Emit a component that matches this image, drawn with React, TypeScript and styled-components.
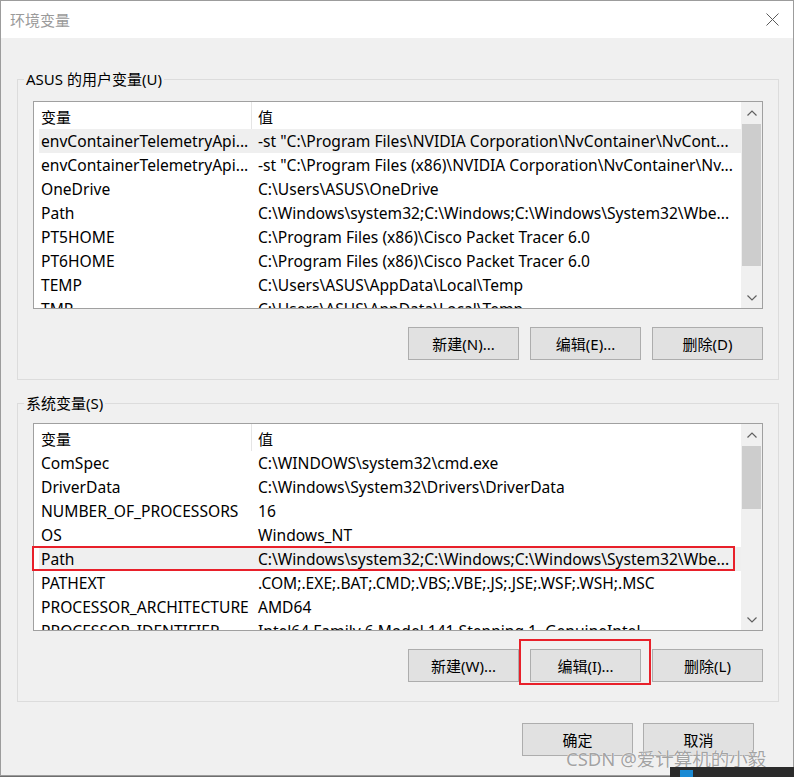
import React from 'react';
import styled, { createGlobalStyle } from 'styled-components';

const GlobalStyle = createGlobalStyle`
  html, body {
    margin: 0;
    padding: 0;
    background: #6e6e6e;
  }
  body {
    font-family: "Noto Sans", "Noto Sans CJK SC", sans-serif;
    font-size: 15px;
    color: #000;
  }
`;

const RED = '#e8202a';

const Window = styled.div`
  position: relative;
  width: 794px;
  height: 776px;
  box-sizing: border-box;
  border: 1px solid #9c9c9c;
  background: #f0f0f0;
  display: flex;
  flex-direction: column;
`;

const TitleBar = styled.div`
  height: 37px;
  flex: none;
  background: #fff;
  display: flex;
  align-items: center;
  justify-content: space-between;
  padding: 0 14px 0 9px;
`;

const Title = styled.span`
  font-size: 15px;
  color: #9a9a9a;
`;

const Body = styled.div`
  flex: 1;
  display: flex;
  flex-direction: column;
  padding: 0 14px 0 16px;
`;

const Group = styled.fieldset<{ $gap: number; $pad: number }>`
  margin: ${p => p.$gap}px 0 0;
  padding: ${p => p.$pad}px 15px 19px 15px;
  border: 1px solid #dcdcdc;
  min-width: 0;
`;

const Legend = styled.legend`
  font-size: 15px;
  line-height: 20px;
  padding: 0 2px;
  margin-left: -9px;
`;

const ListBox = styled.div`
  height: 208px;
  box-sizing: border-box;
  border: 1px solid #a0a0a0;
  background: #fff;
  display: flex;
`;

const ListBody = styled.div`
  flex: 1;
  display: flex;
  flex-direction: column;
  clip-path: inset(0 0 0 -8px);
`;

const HeaderRow = styled.div`
  flex: none;
  height: 27px;
  display: flex;
  margin-left: 5px;
`;

const HeadCell = styled.div<{ $first?: boolean }>`
  box-sizing: border-box;
  width: ${p => (p.$first ? '213px' : 'auto')};
  flex: ${p => (p.$first ? 'none' : '1')};
  border-right: ${p => (p.$first ? '1px solid #e5e5e5' : 'none')};
  padding: 3px 0 0 ${p => (p.$first ? '2px' : '6px')};
  line-height: 24px;
`;

const Row = styled.div<{ $selected?: boolean; $marked?: boolean }>`
  position: relative;
  flex: none;
  height: 24px;
  display: flex;
  margin-left: 5px;
  line-height: 24px;
  background: ${p => (p.$selected ? '#efefef' : 'transparent')};

  &::after {
    content: '';
    display: ${p => (p.$marked ? 'block' : 'none')};
    position: absolute;
    top: -1px;
    bottom: 0;
    left: -7px;
    right: 6px;
    border: 2px solid ${RED};
  }
`;

const Cell = styled.div<{ $first?: boolean }>`
  box-sizing: border-box;
  width: ${p => (p.$first ? '213px' : 'auto')};
  flex: ${p => (p.$first ? 'none' : '1')};
  min-width: 0;
  padding-left: ${p => (p.$first ? '2px' : '6px')};
  font-size: 15.6px;
  white-space: nowrap;
  overflow: hidden;
`;

const Scrollbar = styled.div`
  flex: none;
  width: 21px;
  background: #f0f0f0;
  display: flex;
  flex-direction: column;
`;

const ArrowBox = styled.div`
  height: 21px;
  flex: none;
  display: flex;
  align-items: center;
  justify-content: center;
`;

const Track = styled.div`
  flex: 1;
`;

const Thumb = styled.div<{ $height: number }>`
  margin: 1px 1px 0;
  height: ${p => p.$height}px;
  background: #cdcdcd;
`;

const ButtonRow = styled.div<{ $gap: number; $right?: number; $top: number }>`
  display: flex;
  justify-content: flex-end;
  gap: ${p => p.$gap}px;
  margin: ${p => p.$top}px ${p => p.$right ?? 0}px 0 0;
`;

const Button = styled.button`
  width: 111px;
  height: 33px;
  box-sizing: border-box;
  border: 1px solid #adadad;
  background: #e1e1e1;
  font-family: "Noto Sans", "Noto Sans CJK SC", sans-serif;
  font-size: 15px;
  color: #000;
  padding: 0;
`;

const Marked = styled.span`
  position: relative;
  display: flex;

  &::after {
    content: '';
    position: absolute;
    top: -10px;
    right: -10px;
    bottom: -3px;
    left: -11px;
    border: 2px solid ${RED};
    pointer-events: none;
  }
`;

const Watermark = styled.div`
  position: absolute;
  left: 565px;
  top: 745px;
  font-size: 18.5px;
  line-height: 26px;
  color: #a3a3a3;
  text-shadow: 0 0 1px #fff, 0 0 1px #fff;
  white-space: nowrap;
`;

const Taskbar = styled.div`
  position: absolute;
  left: 670px;
  top: 767px;
  width: 124px;
  height: 10px;
  background: #2b2b2b;
`;

const TaskIcon = styled.div`
  margin: 3px 0 0 10px;
  width: 13px;
  height: 7px;
  background: #1a8ad4;
`;

type Item = { name: string; value: string; selected?: boolean; marked?: boolean };

const userVars: Item[] = [
  { name: 'envContainerTelemetryApi...', value: '-st "C:\\Program Files\\NVIDIA Corporation\\NvContainer\\NvCont...', selected: true },
  { name: 'envContainerTelemetryApi...', value: '-st "C:\\Program Files (x86)\\NVIDIA Corporation\\NvContainer\\Nv...' },
  { name: 'OneDrive', value: 'C:\\Users\\ASUS\\OneDrive' },
  { name: 'Path', value: 'C:\\Windows\\system32;C:\\Windows;C:\\Windows\\System32\\Wbe...' },
  { name: 'PT5HOME', value: 'C:\\Program Files (x86)\\Cisco Packet Tracer 6.0' },
  { name: 'PT6HOME', value: 'C:\\Program Files (x86)\\Cisco Packet Tracer 6.0' },
  { name: 'TEMP', value: 'C:\\Users\\ASUS\\AppData\\Local\\Temp' },
  { name: 'TMP', value: 'C:\\Users\\ASUS\\AppData\\Local\\Temp' },
];

const systemVars: Item[] = [
  { name: 'ComSpec', value: 'C:\\WINDOWS\\system32\\cmd.exe' },
  { name: 'DriverData', value: 'C:\\Windows\\System32\\Drivers\\DriverData' },
  { name: 'NUMBER_OF_PROCESSORS', value: '16' },
  { name: 'OS', value: 'Windows_NT' },
  { name: 'Path', value: 'C:\\Windows\\system32;C:\\Windows;C:\\Windows\\System32\\Wbe...', selected: true, marked: true },
  { name: 'PATHEXT', value: '.COM;.EXE;.BAT;.CMD;.VBS;.VBE;.JS;.JSE;.WSF;.WSH;.MSC' },
  { name: 'PROCESSOR_ARCHITECTURE', value: 'AMD64' },
  { name: 'PROCESSOR_IDENTIFIER', value: 'Intel64 Family 6 Model 141 Stepping 1, GenuineIntel' },
];

function Chevron({ up }: { up?: boolean }) {
  return (
    <svg width="10" height="6" viewBox="0 0 10 6">
      <path
        d={up ? 'M0.5 5.5 L5 1 L9.5 5.5' : 'M0.5 0.5 L5 5 L9.5 0.5'}
        fill="none"
        stroke="#606060"
        strokeWidth="1.2"
      />
    </svg>
  );
}

function VarList({ items, thumb }: { items: Item[]; thumb: number }) {
  return (
    <ListBox>
      <ListBody>
        <HeaderRow>
          <HeadCell $first>变量</HeadCell>
          <HeadCell>值</HeadCell>
        </HeaderRow>
        {items.map((it, i) => (
          <Row key={i} $selected={it.selected} $marked={it.marked}>
            <Cell $first>{it.name}</Cell>
            <Cell>{it.value}</Cell>
          </Row>
        ))}
      </ListBody>
      <Scrollbar>
        <ArrowBox><Chevron up /></ArrowBox>
        <Track><Thumb $height={thumb} /></Track>
        <ArrowBox><Chevron /></ArrowBox>
      </Scrollbar>
    </ListBox>
  );
}

export default function App() {
  return (
    <>
      <GlobalStyle />
      <Window>
        <TitleBar>
          <Title>环境变量</Title>
          <svg width="13" height="13" viewBox="0 0 13 13">
            <path d="M0.5 0.5 L12.5 12.5 M12.5 0.5 L0.5 12.5" stroke="#5a5a5a" strokeWidth="1" />
          </svg>
        </TitleBar>
        <Body>
          <Group $gap={31} $pad={12}>
            <Legend>ASUS 的用户变量(U)</Legend>
            <VarList items={userVars} thumb={142} />
            <ButtonRow $gap={11} $top={18}>
              <Button>新建(N)...</Button>
              <Button>编辑(E)...</Button>
              <Button>删除(D)</Button>
            </ButtonRow>
          </Group>
          <Group $gap={13} $pad={10}>
            <Legend>系统变量(S)</Legend>
            <VarList items={systemVars} thumb={63} />
            <ButtonRow $gap={11} $top={18}>
              <Button>新建(W)...</Button>
              <Marked>
                <Button>编辑(I)...</Button>
              </Marked>
              <Button>删除(L)</Button>
            </ButtonRow>
          </Group>
          <ButtonRow $gap={10} $top={21} $right={25}>
            <Button>确定</Button>
            <Button>取消</Button>
          </ButtonRow>
        </Body>
        <Watermark>CSDN @爱计算机的小毅</Watermark>
      </Window>
      <Taskbar>
        <TaskIcon />
      </Taskbar>
    </>
  );
}
